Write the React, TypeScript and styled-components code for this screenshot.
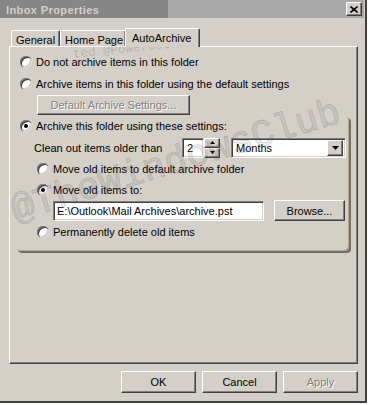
import React from "react";
import styled, { createGlobalStyle, css } from "styled-components";

const GlobalStyle = createGlobalStyle`
  html, body {
    margin: 0;
    padding: 0;
    background: #ffffff;
  }
  body {
    font-family: "Liberation Sans", Arial, sans-serif;
    font-size: 11px;
    color: #000000;
  }
  * {
    box-sizing: border-box;
  }
`;

const raised = css`
  border: 1px solid;
  border-color: #ffffff #404040 #404040 #ffffff;
  box-shadow: inset -1px -1px 0 #808080, inset 1px 1px 0 #d4d0c8;
  background: #d4d0c8;
`;

const sunken = css`
  border: 1px solid;
  border-color: #808080 #ffffff #ffffff #808080;
  box-shadow: inset 1px 1px 0 #404040, inset -1px -1px 0 #d4d0c8;
  background: #ffffff;
`;

const Window = styled.div`
  position: relative;
  width: 367px;
  height: 403px;
  background: #d4d0c8;
  box-shadow: inset -1px -1px 0 #404040, inset -2px -2px 0 #404040;
  overflow: hidden;
  display: flex;
  flex-direction: column;
`;

const TitleBar = styled.div`
  height: 18px;
  margin-right: 3px;
  padding: 0 2px 0 6px;
  display: flex;
  align-items: center;
  justify-content: space-between;
  background: linear-gradient(90deg, #868686 0, #868686 168px, #a8a8a8 168px);
`;

const Title = styled.span`
  font-weight: bold;
  color: #d4d0c8;
  letter-spacing: 0.4px;
  margin-top: 1px;
`;

const CloseButton = styled.div`
  ${raised};
  width: 16px;
  height: 14px;
  display: flex;
  align-items: center;
  justify-content: center;
`;

const Body = styled.div`
  flex: 1;
  padding: 10px 9px 0 9px;
  display: flex;
  flex-direction: column;
`;

const TabStrip = styled.div`
  position: relative;
  z-index: 1;
  height: 18px;
  padding-left: 2px;
  display: flex;
  align-items: flex-end;
`;

const Tab = styled.div<{ $active?: boolean; $width: number }>`
  position: relative;
  width: ${(p) => p.$width}px;
  height: ${(p) => (p.$active ? 19 : 16)}px;
  margin-bottom: ${(p) => (p.$active ? -1 : 0)}px;
  margin-left: ${(p) => (p.$active ? -1 : 0)}px;
  padding: ${(p) => (p.$active ? "0 0 1px 6px" : "2px 0 0 4px")};
  display: flex;
  align-items: center;
  background: #d4d0c8;
  border-top: 1px solid #ffffff;
  border-left: 1px solid #ffffff;
  border-right: 1px solid #404040;
  border-radius: 2px 2px 0 0;
  box-shadow: inset -1px 0 0 #808080;
  z-index: ${(p) => (p.$active ? 2 : 1)};
  white-space: nowrap;
`;

const TabPanel = styled.div`
  height: 318px;
  padding: 4px 8px 0 10px;
  border: 1px solid;
  border-color: #ffffff #404040 #404040 #ffffff;
  box-shadow: inset -1px -1px 0 #808080;
`;

const Option = styled.label<{ $indent?: number; $height?: number }>`
  display: flex;
  align-items: center;
  gap: 4px;
  height: ${(p) => p.$height ?? 22}px;
  margin-left: ${(p) => p.$indent ?? 0}px;
  white-space: nowrap;
`;

const RadioMark = styled.span<{ $checked?: boolean }>`
  position: relative;
  flex: none;
  width: 12px;
  height: 12px;
  border-radius: 50%;
  background: #ffffff;
  box-shadow: inset 1px 1px 0 #808080, inset 2px 2px 0 #404040,
    inset -2px -2px 0 #d4d0c8;

  &::after {
    content: "";
    display: ${(p) => (p.$checked ? "block" : "none")};
    position: absolute;
    left: 4px;
    top: 4px;
    width: 4px;
    height: 4px;
    border-radius: 50%;
    background: #000000;
  }
`;

const PushButton = styled.button<{ $width: number; $height?: number; $indent?: number }>`
  ${raised};
  width: ${(p) => p.$width}px;
  height: ${(p) => p.$height ?? 21}px;
  margin-left: ${(p) => p.$indent ?? 0}px;
  padding: 0;
  font-family: inherit;
  font-size: 11px;
  color: #000000;
  display: flex;
  align-items: center;
  justify-content: center;

  &:disabled {
    color: #808080;
    text-shadow: 1px 1px 0 #ffffff;
  }
`;

const SettingsGroup = styled.div`
  margin-left: -5px;
  width: 333px;
  padding: 0 0 7px 5px;
  border-radius: 0 4px 4px 4px;
  box-shadow: 1px 1px 0 #b9a97c, 3px 3px 0 #707070;
`;

const Row = styled.div<{ $height?: number; $indent?: number }>`
  display: flex;
  align-items: center;
  height: ${(p) => p.$height ?? 21}px;
  margin-left: ${(p) => p.$indent ?? 0}px;
`;

const CleanLabel = styled.span`
  width: 148px;
  margin-left: 14px;
  white-space: nowrap;
`;

const SpinField = styled.div`
  ${sunken};
  width: 22px;
  height: 20px;
  padding-left: 4px;
  display: flex;
  align-items: center;
`;

const SpinButtons = styled.div`
  display: flex;
  flex-direction: column;
  width: 16px;
  height: 20px;
`;

const SpinButton = styled.div`
  ${raised};
  flex: 1;
  display: flex;
  align-items: center;
  justify-content: center;
`;

const Select = styled.div`
  ${sunken};
  width: 115px;
  height: 20px;
  margin-left: 11px;
  padding: 2px 2px 2px 4px;
  display: flex;
  align-items: center;
`;

const DropButton = styled.div`
  ${raised};
  margin-left: auto;
  width: 16px;
  height: 16px;
  display: flex;
  align-items: center;
  justify-content: center;
`;

const PathField = styled.div`
  ${sunken};
  width: 211px;
  height: 20px;
  margin-left: 33px;
  margin-right: 10px;
  padding-left: 3px;
  display: flex;
  align-items: center;
  white-space: nowrap;
`;

const ButtonRow = styled.div`
  margin-top: 7px;
  display: flex;
  justify-content: flex-end;
  gap: 6px;
`;

const Watermark = styled.div`
  position: absolute;
  pointer-events: none;
  white-space: nowrap;
  font-family: "Liberation Mono", "DejaVu Sans Mono", monospace;
`;

const BigMark = styled(Watermark)`
  left: 5px;
  top: 143px;
  width: 342px;
  font-size: 38px;
  line-height: 38px;
  text-align: center;
  color: rgba(90, 90, 90, 0.1);
  -webkit-text-stroke: 1px rgba(90, 90, 90, 0.22);
  transform: rotate(-17deg);
`;

const SmallMark = styled(Watermark)`
  left: 73px;
  top: 43px;
  font-size: 12.5px;
  line-height: 13px;
  color: rgba(110, 110, 110, 0.3);
  transform: rotate(-6deg);
`;

const Arrow = ({ w, h, up }: { w: number; h: number; up?: boolean }) => (
  <svg width={w} height={h} viewBox={`0 0 ${w} ${h}`}>
    <polygon
      points={up ? `0,${h} ${w},${h} ${w / 2},0` : `0,0 ${w},0 ${w / 2},${h}`}
      fill="#000000"
    />
  </svg>
);

const Radio = ({
  checked,
  indent,
  height,
  children,
}: {
  checked?: boolean;
  indent?: number;
  height?: number;
  children: React.ReactNode;
}) => (
  <Option $indent={indent} $height={height}>
    <RadioMark $checked={checked} />
    <span>{children}</span>
  </Option>
);

export default function App() {
  return (
    <>
      <GlobalStyle />
      <Window>
        <TitleBar>
          <Title>Inbox Properties</Title>
          <CloseButton>
            <svg width="8" height="7" viewBox="0 0 8 7">
              <path d="M0.5 0.5 L7.5 6.5 M7.5 0.5 L0.5 6.5" stroke="#000000" strokeWidth="1.6" />
            </svg>
          </CloseButton>
        </TitleBar>
        <Body>
          <TabStrip>
            <Tab $width={49}>General</Tab>
            <Tab $width={66}>Home Page</Tab>
            <Tab $width={75} $active>
              AutoArchive
            </Tab>
          </TabStrip>
          <TabPanel>
            <Radio>Do not archive items in this folder</Radio>
            <Radio>Archive items in this folder using the default settings</Radio>
            <PushButton $width={153} $height={20} $indent={17} disabled>
              Default Archive Settings...
            </PushButton>
            <SettingsGroup>
              <Radio checked>Archive this folder using these settings:</Radio>
              <Row>
                <CleanLabel>Clean out items older than</CleanLabel>
                <SpinField>2</SpinField>
                <SpinButtons>
                  <SpinButton>
                    <Arrow w={5} h={3} up />
                  </SpinButton>
                  <SpinButton>
                    <Arrow w={5} h={3} />
                  </SpinButton>
                </SpinButtons>
                <Select>
                  Months
                  <DropButton>
                    <Arrow w={7} h={4} />
                  </DropButton>
                </Select>
              </Row>
              <Radio indent={17}>Move old items to default archive folder</Radio>
              <Radio indent={17} height={20} checked>
                Move old items to:
              </Radio>
              <Row>
                <PathField>E:\Outlook\Mail Archives\archive.pst</PathField>
                <PushButton $width={71}>Browse...</PushButton>
              </Row>
              <Radio indent={17}>Permanently delete old items</Radio>
            </SettingsGroup>
          </TabPanel>
          <ButtonRow>
            <PushButton $width={75} $height={22}>
              OK
            </PushButton>
            <PushButton $width={75} $height={22}>
              Cancel
            </PushButton>
            <PushButton $width={75} $height={22} disabled>
              Apply
            </PushButton>
          </ButtonRow>
        </Body>
        <SmallMark>ted @PowercutIN</SmallMark>
        <BigMark>@TheWindowsClub</BigMark>
      </Window>
    </>
  );
}
